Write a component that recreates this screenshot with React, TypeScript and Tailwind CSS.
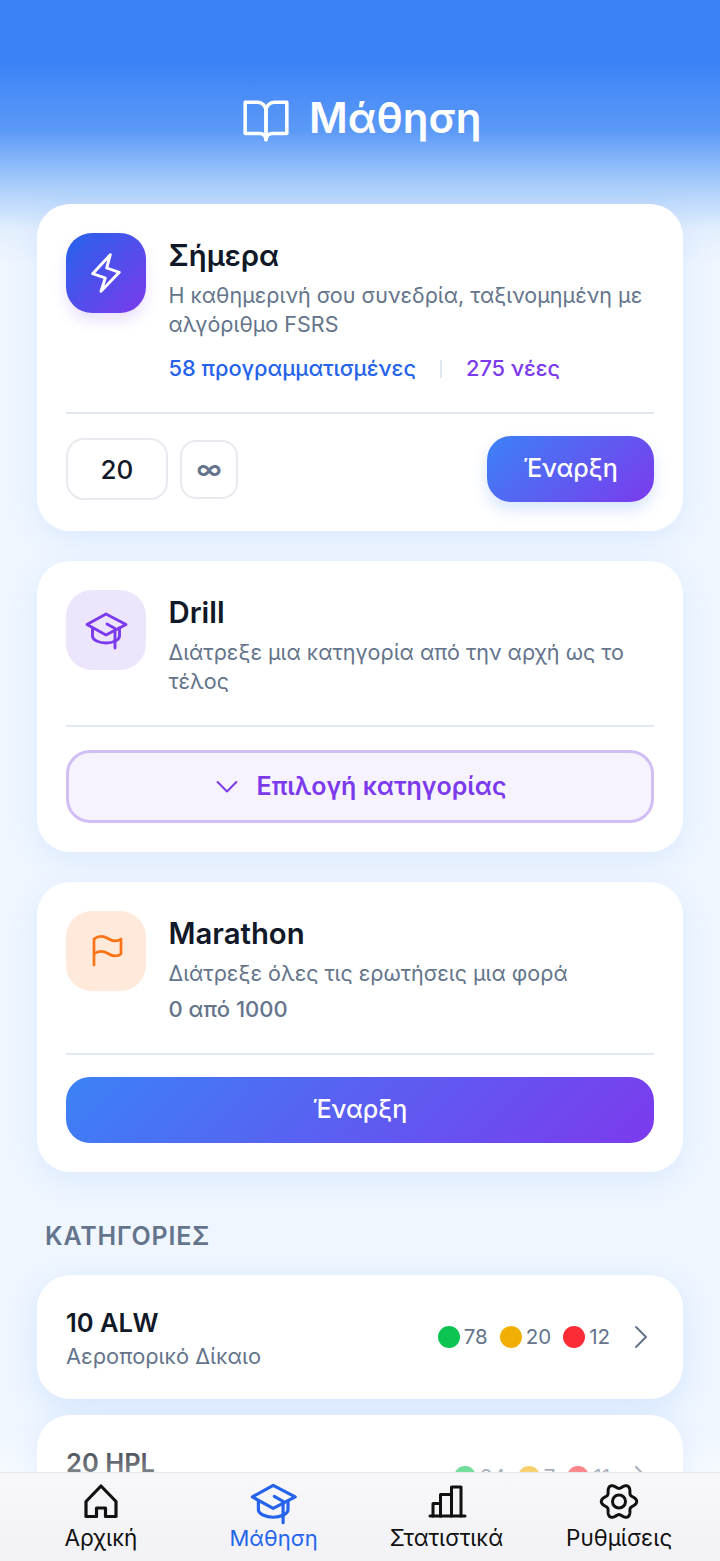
import React from "react";

function BookIcon() {
  return (
    <svg width="50" height="50" viewBox="0 0 24 24" fill="none" stroke="white" strokeWidth="1.680" strokeLinejoin="round" strokeLinecap="round" className="shrink-0 mt-[2.500px]">
      <path d="M2 3h6a4 4 0 0 1 4 4v14a3 3 0 0 0-3-3H2z" />
      <path d="M22 3h-6a4 4 0 0 0-4 4v14a3 3 0 0 1 3-3h7z" />
    </svg>
  );
}

function BoltIcon() {
  return (
    <svg width="80" height="80" viewBox="0 0 80 80" fill="none" stroke="white" strokeWidth="2.900" strokeLinejoin="round" strokeLinecap="round">
      <path d="M44.300 21.700 L26.700 40.700 L39.300 45 L35 58.300 L53.300 39.300 L40.700 35 Z" />
    </svg>
  );
}

function CapPaths() {
  return (
    <>
      <path d="M40 24 L60 34.500 L40 45 L21 34.500 Z" />
      <path d="M26.500 38 V46 C26.500 50 33 53 40 53 C47 53 53.500 50 53.500 46 V38" />
      <path d="M41 34 L49 38.500 V58" />
    </>
  );
}

function FlagIcon() {
  return (
    <svg width="80" height="80" viewBox="0 0 80 80" fill="none" stroke="#f97316" strokeWidth="2.700" strokeLinejoin="round" strokeLinecap="round">
      <path d="M28 54 V28 C33 24 38 25 42 27.500 C46 30 51 31 55 28 V43 C51 46 46 45 42 42.500 C38 40 33 39 28 43" />
    </svg>
  );
}

function HomeIcon() {
  return (
    <svg width="44" height="44" viewBox="0 0 44 44" fill="none" stroke="currentColor" strokeWidth="3.200" strokeLinejoin="round" strokeLinecap="round">
      <path d="M7 36.500 V21.500 L22 6 L37 21.500 V36.500 H26.500 V28 H17.500 V36.500 Z" />
    </svg>
  );
}

function StatsIcon() {
  return (
    <svg width="44" height="44" viewBox="0 0 44 44" fill="none" stroke="currentColor" strokeWidth="3" strokeLinejoin="round" strokeLinecap="round">
      <path d="M6 36 H41" />
      <path d="M9 36 V23.500 H16.500 V36" />
      <path d="M16.500 36 V14.500 H27.500 V36" />
      <path d="M27.500 14.500 V7 H37 V36" />
    </svg>
  );
}

const gearPath = (() => {
  const pts: string[] = [];
  for (let i = 0; i < 120; i++) {
    const t = (i / 120) * Math.PI * 2;
    const r = 15.4 + 2.300 * Math.cos(6 * t);
    pts.push(`${(22 + r * Math.cos(t)).toFixed(2)} ${(21.500 + r * Math.sin(t)).toFixed(2)}`);
  }
  return `M${pts.join(" L")} Z`;
})();

function GearIcon() {
  return (
    <svg width="44" height="44" viewBox="0 0 44 44" fill="none" stroke="currentColor" strokeWidth="3" strokeLinejoin="round">
      <path d={gearPath} />
      <circle cx="22" cy="21.500" r="6.500" />
    </svg>
  );
}

function Dot({ color, value }: { color: string; value: string }) {
  return (
    <div className="flex items-center gap-[4px]">
      <span className={`w-[22px] h-[22px] rounded-full ${color}`} />
      <span className="text-[20.500px] leading-[24px] text-[#64748b]">{value}</span>
    </div>
  );
}

function Row({ title, sub, values }: { title: string; sub: string; values: string[] }) {
  return (
    <div className="h-[124px] shrink-0 rounded-[33px] bg-white shadow-[0_8px_30px_rgba(59,130,246,0.14)] px-[29px] flex items-center justify-between">
      <div className="flex flex-col">
        <span className="text-[25.500px] leading-[38px] font-semibold text-[#111827]">{title}</span>
        <span className="text-[21.800px] leading-[28px] text-[#64748b]">{sub}</span>
      </div>
      <div className="flex items-center">
        <div className="flex items-center gap-[12px]">
          <Dot color="bg-[#0bc452]" value={values[0]} />
          <Dot color="bg-[#f1ae03]" value={values[1]} />
          <Dot color="bg-[#fb2c36]" value={values[2]} />
        </div>
        <svg width="16" height="28" viewBox="0 0 16 28" fill="none" stroke="#64748b" strokeWidth="2" strokeLinecap="round" strokeLinejoin="round" className="ml-[24px] mr-[4px]">
          <polyline points="2,4 12,14 2,24" />
        </svg>
      </div>
    </div>
  );
}

const card = "rounded-[33px] bg-white shadow-[0_8px_30px_rgba(59,130,246,0.1)] p-[29px] flex flex-col";
const gradient = "bg-[linear-gradient(135deg,#3b82f6,#7c3aed)]";
const titleCls = "text-[29.300px] leading-[44px] font-semibold text-[#111827] pt-[1px] box-content mb-[3px]";
const descCls = "text-[21.500px] leading-[29px] text-[#64748b]";

export default function App() {
  return (
    <div className="relative w-[720px] h-[1561px] overflow-hidden bg-[#eff6ff] font-['Inter',sans-serif]">
      <div className="absolute inset-x-0 top-0 h-[270px] bg-[linear-gradient(180deg,#3b82f6_0px,#3b82f6_60px,#5b99f7_130px,#a9cdfb_185px,#e3effe_230px,#eff6ff_265px)]" />
      <div className="relative flex flex-col">
        <header className="h-[204px] pt-[93px] pl-[2.500px] flex justify-center items-start gap-[18px]">
          <BookIcon />
          <h1 className="text-[42px] leading-[50px] font-semibold text-white">Μάθηση</h1>
        </header>
        <main className="px-[37px] flex flex-col gap-[30px]">
          <section className={`${card} h-[327px]`}>
            <div className="flex gap-[22.500px] h-[180px]">
              <div className="w-[80px] h-[80px] shrink-0 rounded-[26px] bg-[linear-gradient(135deg,#2563eb,#7c3aed)] shadow-[0_8px_14px_rgba(124,58,237,0.15)]">
                <BoltIcon />
              </div>
              <div className="flex flex-col">
                <h2 className={titleCls}>Σήμερα</h2>
                <p className={descCls}>Η καθημερινή σου συνεδρία, ταξινομημένη με αλγόριθμο FSRS</p>
                <div className="flex items-center mt-[15px] text-[21.800px] leading-[29px] font-medium">
                  <span className="text-[#2563eb]">58 προγραμματισμένες</span>
                  <span className="w-[2px] h-[18px] bg-[#e2e8f0] mx-[24px]" />
                  <span className="text-[#7c3aed]">275 νέες</span>
                </div>
              </div>
            </div>
            <div className="h-[2px] bg-[#e2e8f0]" />
            <div className="flex items-center justify-between mt-[22px]">
              <div className="flex items-center gap-[12px]">
                <div className="w-[102px] h-[62px] rounded-[18px] border-2 border-[#e8eaf0] flex items-center justify-center text-[26px] font-medium text-[#111827]">20</div>
                <div className="w-[58px] h-[59px] rounded-[16px] border-2 border-[#e8eaf0] flex items-center justify-center text-[26px] font-semibold text-[#64748b]">∞</div>
              </div>
              <div className={`w-[167px] h-[66px] rounded-[24px] ${gradient} shadow-[0_8px_16px_rgba(59,130,246,0.2)] flex items-center justify-center text-[25px] font-medium text-white`}>Έναρξη</div>
            </div>
          </section>

          <section className={`${card} h-[291px]`}>
            <div className="flex gap-[22.500px] h-[136px]">
              <div className="w-[80px] h-[80px] shrink-0 rounded-[26px] bg-[#ede5fb]">
                <svg width="80" height="80" viewBox="0 0 80 80" fill="none" stroke="#7c3aed" strokeWidth="2.900" strokeLinejoin="round" strokeLinecap="round">
                  <CapPaths />
                </svg>
              </div>
              <div className="flex flex-col">
                <h2 className={titleCls}>Drill</h2>
                <p className={descCls}>Διάτρεξε μια κατηγορία από την αρχή ως το τέλος</p>
              </div>
            </div>
            <div className="h-[2px] bg-[#e2e8f0]" />
            <div className="mt-[23px] h-[73px] rounded-[24px] border-[3px] border-[#d1bff3] bg-[#f7f3fe] flex items-center justify-center gap-[17px] text-[25px] font-semibold text-[#7c3aed]">
              <svg width="26" height="26" viewBox="0 0 26 26" fill="none" stroke="currentColor" strokeWidth="2" strokeLinecap="round" strokeLinejoin="round">
                <polyline points="3.600,8 13,17.500 22.400,8" />
              </svg>
              <span>Επιλογή κατηγορίας</span>
            </div>
          </section>

          <section className={`${card} h-[290px]`}>
            <div className="flex gap-[22.500px] h-[143px]">
              <div className="w-[80px] h-[80px] shrink-0 rounded-[26px] bg-[#ffe9da]">
                <FlagIcon />
              </div>
              <div className="flex flex-col">
                <h2 className={titleCls}>Marathon</h2>
                <p className={descCls}>Διάτρεξε όλες τις ερωτήσεις μια φορά</p>
                <p className="mt-[7px] text-[22px] leading-[29px] font-medium text-[#64748b]">0 από 1000</p>
              </div>
            </div>
            <div className="h-[2px] bg-[#e2e8f0]" />
            <div className={`mt-[22px] h-[66px] rounded-[24px] ${gradient} flex items-center justify-center text-[25px] font-medium text-white`}>Έναρξη</div>
          </section>

          <div className="flex flex-col gap-[16px]">
            <h3 className="px-[8px] mt-[18px] mb-[7px] h-[32px] text-[25px] leading-[32px] font-semibold tracking-[0.8px] text-[#64748b]">ΚΑΤΗΓΟΡΙΕΣ</h3>
            <Row title="10 ALW" sub="Αεροπορικό Δίκαιο" values={["78", "20", "12"]} />
            <Row title="20 HPL" sub="Ανθρώπινες Επιδόσεις" values={["84", "7", "11"]} />
          </div>
        </main>
      </div>
      <div className="absolute inset-x-0 bottom-[89px] h-[50px] bg-[linear-gradient(180deg,rgba(255,255,255,0)_0%,rgba(255,255,255,0.25)_60%,rgba(255,255,255,0.45)_100%)]" />
      <nav className="absolute inset-x-0 bottom-0 h-[89px] border-t border-[#e5e7eb] bg-gradient-to-b from-[#f8f8fa] to-[#f2f2f6] grid grid-cols-4 px-[14.500px] text-[22.500px] leading-[28px] text-[#111]">
        <div className="flex flex-col items-center pt-[7px]">
          <div className="h-[44px]"><HomeIcon /></div>
          <span>Αρχική</span>
        </div>
        <div className="flex flex-col items-center pt-[7px] text-[#2563eb]">
          <div className="h-[44px]">
            <svg width="49.500" height="45" viewBox="18 20 45 41" fill="none" stroke="currentColor" strokeWidth="2.900" strokeLinejoin="round" strokeLinecap="round" className="mt-[0.6px]">
              <CapPaths />
            </svg>
          </div>
          <span className="text-[22px]">Μάθηση</span>
        </div>
        <div className="flex flex-col items-center pt-[7px]">
          <div className="h-[44px]"><StatsIcon /></div>
          <span>Στατιστικά</span>
        </div>
        <div className="flex flex-col items-center pt-[7px]">
          <div className="h-[44px]"><GearIcon /></div>
          <span>Ρυθμίσεις</span>
        </div>
      </nav>
    </div>
  );
}
